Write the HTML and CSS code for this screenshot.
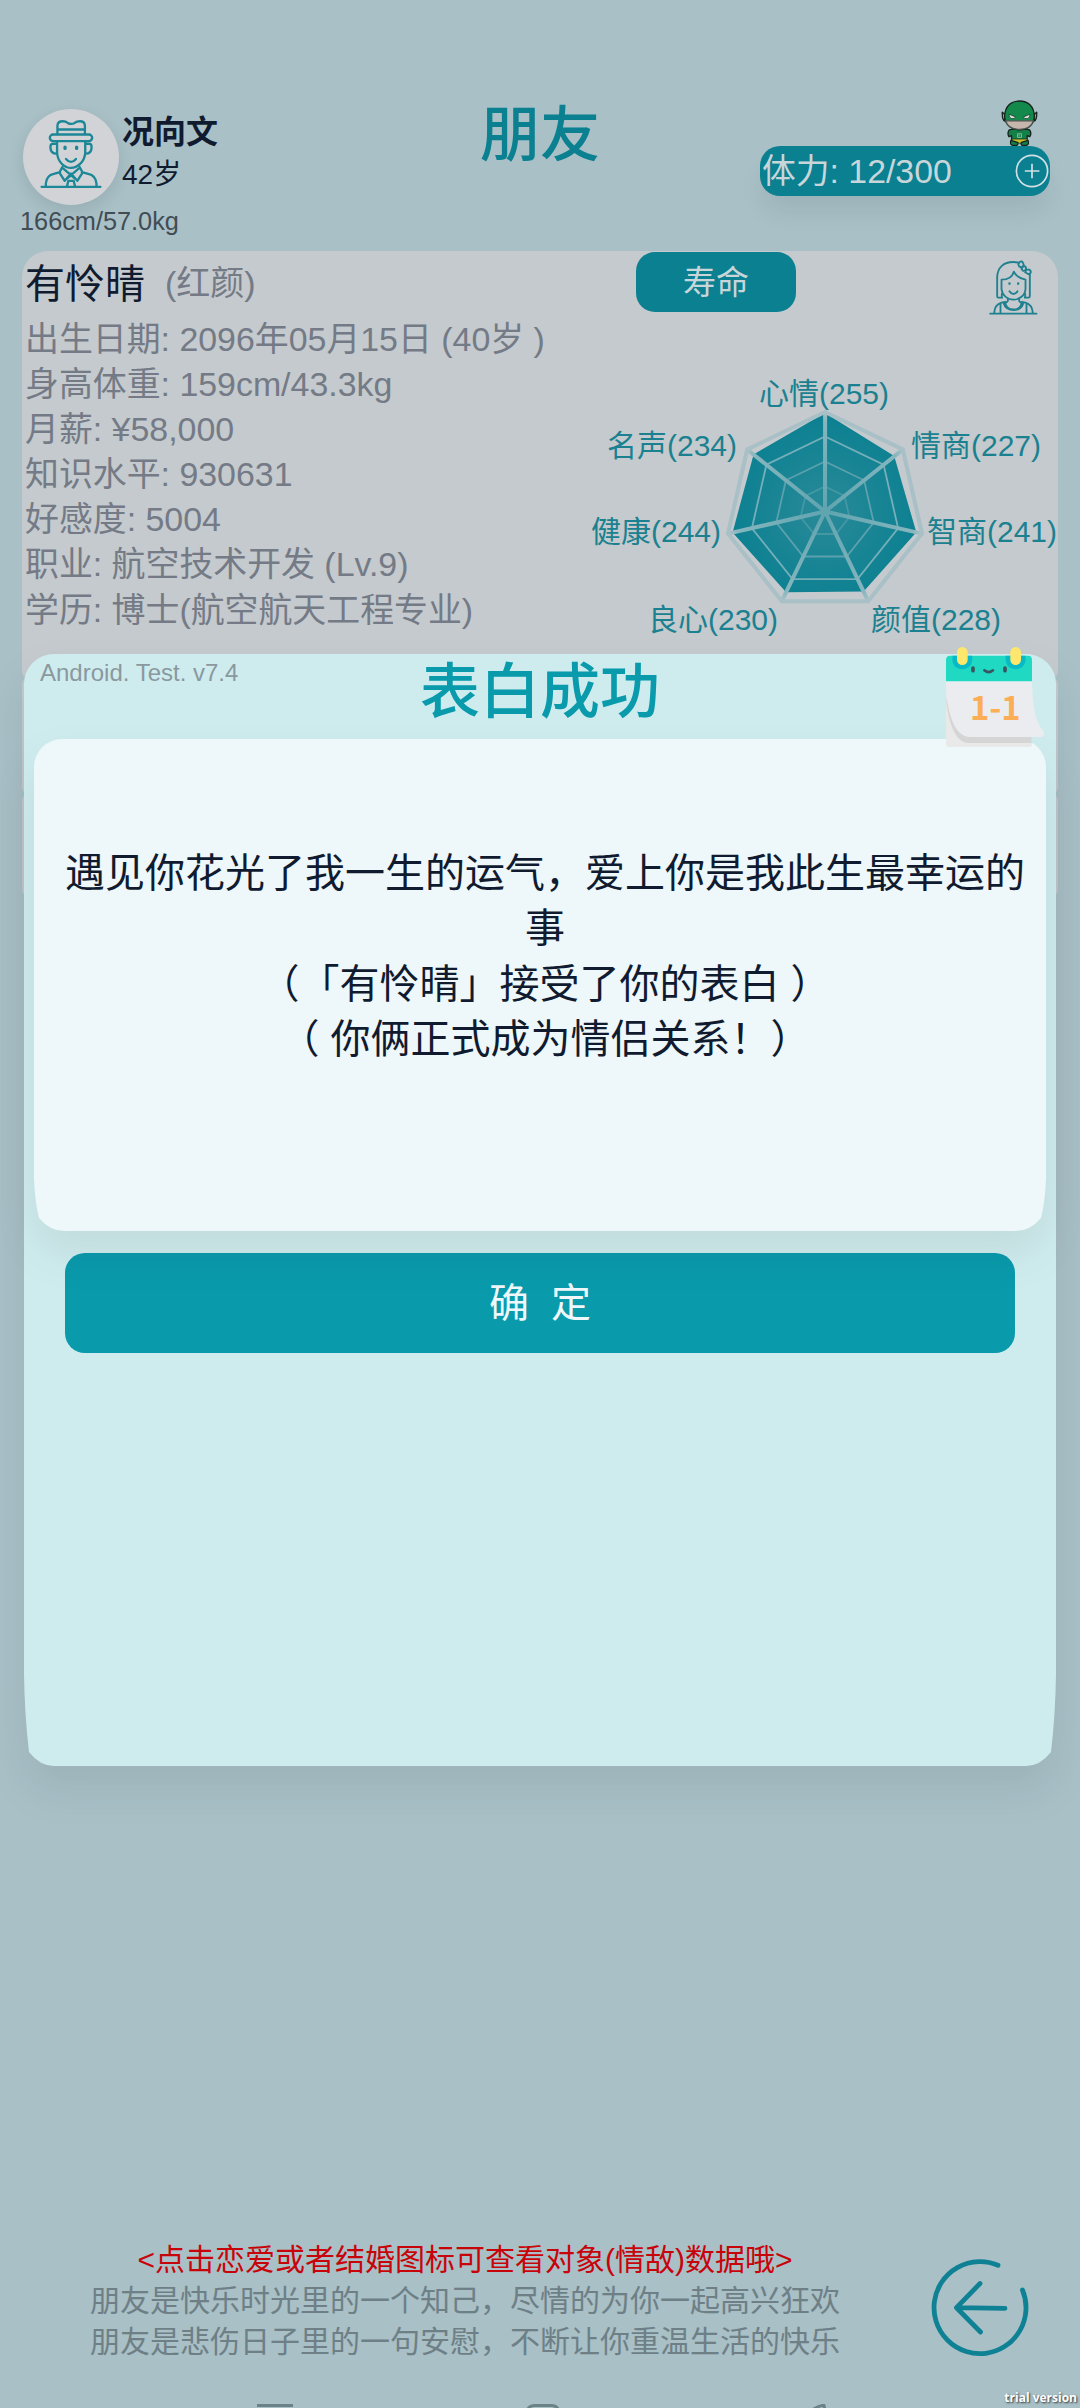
FILE: index.html
```html
<!DOCTYPE html>
<html lang="zh-CN">
<head>
<meta charset="utf-8">
<title>朋友</title>
<link rel="stylesheet" href="styles.css">
</head>
<body>
<div class="screen">
  <header class="header">
    <div class="player">
      <div class="player-top">
        <div class="avatar">
          <svg viewBox="68 85 290 290" fill="none" stroke="#1c8797" stroke-width="7" stroke-linecap="round" stroke-linejoin="round">
            <path d="M172 161V135Q173 122 188 122Q197 122 203 127Q213 133 224 127Q230 122 240 122Q254 122 255 135V161M172 147H255"/>
            <rect x="149" y="162" width="128" height="20" rx="10"/>
            <path d="M171 183V218C173 246 194 263 213 263S253 246 256 218V183M170 190H160Q151 190 151 198V203Q152 219 169 220M257 190H267Q275 190 275 198V203Q274 219 258 220"/>
            <path d="M195 200V204M230 200V204" stroke-width="10"/>
            <path d="M198 236Q213 254 228 236"/>
            <path d="M124 320H302M137 318V310Q139 286 161 281L180 276M290 318V310Q288 286 265 281L246 276M187 260L178 277L194 302L213 280L232 302L248 277L239 260M190 265L225 295M236 265L201 295M205 302L201 318M221 302L225 318M205 302H221"/>
          </svg>
        </div>
        <div class="player-id">
          <div class="player-name">况向文</div>
          <div class="player-age">42岁</div>
        </div>
      </div>
      <div class="player-body">166cm/57.0kg</div>
    </div>
    <h1 class="title">朋友</h1>
    <div class="energy-wrap">
      <svg class="hero" viewBox="845 60 110 139" stroke="#17231f" stroke-width="4" stroke-linejoin="round">
        <path d="M869 150Q862 160 868 171L876 168V180H923V168L931 171Q938 160 930 150L915 147H884Z" fill="#128048"/>
        <path d="M876 178H924L920 186L902 191L880 186Z" fill="#c9bd29" stroke-width="2"/>
        <path d="M874 182Q870 198 882 197H892Q898 193 894 188ZM926 182Q930 198 918 197H908Q902 193 906 188Z" fill="#128048"/>
        <path d="M848 97L856 104V124Q847 121 848 97ZM952 97L944 104V124Q953 121 952 97Z" fill="#b6a847"/>
        <path d="M855 110C856 78 875 63 900 63S944 78 945 110C943 138 921 150 900 150S857 138 855 110Z" fill="#138a4c"/>
        <path d="M858 123H942Q934 148 900 149Q866 148 858 123Z" fill="#c7b6ae" stroke="#4c5550"/>
        <path d="M868 103L888 111Q886 118 876 116Q868 113 868 103ZM932 103L912 111Q914 118 924 116Q932 113 932 103Z" fill="#d9e4dd" stroke-width="2"/>
        <path d="M894 162H906V173H894ZM899 165V170" fill="none" stroke="#94c9a2" stroke-width="2.5"/>
      </svg>
      <div class="energy">
        <span>体力: 12/300</span>
        <svg class="plus" viewBox="0 0 34 34" fill="none" stroke="#d1e0e4" stroke-width="1.7"><circle cx="17" cy="17" r="15.6"/><path d="M9.8 17H24.4M17 9.7V24.3"/></svg>
      </div>
    </div>
  </header>

  <main class="cards">
    <section class="card profile">
      <div class="profile-head">
        <span class="friend-name">有怜晴</span>
        <span class="friend-tag">(红颜)</span>
        <button class="life-btn">寿命</button>
        <svg class="girl" viewBox="806 541 146 165" fill="none" stroke="#1f8090" stroke-width="5.5" stroke-linejoin="round" stroke-linecap="round">
          <path d="M845 654H833Q830 654 830 649V593C831 563 850 547 878 547Q888 547 895 549M928 583V649Q928 654 924 654H913"/>
          <path d="M843 600C863 600 876 590 880 576C885 588 898 596 915 600M843 600V628C845 648 862 660 879 660S914 648 915 628V600"/>
          <path d="M893 553L899 546Q904 543 907 549L910 556L903 564L896 560ZM908 560L914 560Q919 565 915 571L908 574L903 568ZM918 570L926 570Q933 574 930 580L924 584L914 578ZM844 642V652M914 642V652"/>
          <path d="M867 611V612M893 611V612" stroke-width="7"/><path d="M867 635Q879 651 891 635M862 657V664L858 668M896 657V664L900 668"/>
          <path d="M809 702H948M821 701Q823 674 843 669L854 667C858 697 900 697 904 667L915 669Q935 674 937 701M840 671V700M918 671V700M850 669C852 699 906 699 908 669"/>
        </svg>
      </div>
      <div class="profile-body">
        <ul class="facts">
          <li>出生日期: 2096年05月15日 (40岁 )</li>
          <li>身高体重: 159cm/43.3kg</li>
          <li>月薪: ¥58,000</li>
          <li>知识水平: 930631</li>
          <li>好感度: 5004</li>
          <li>职业: 航空技术开发 (Lv.9)</li>
          <li>学历: 博士(航空航天工程专业)</li>
        </ul>
        <svg class="radar" viewBox="578 316 480 330">
          <defs>
            <radialGradient id="fill" gradientUnits="userSpaceOnUse" cx="825" cy="511" r="99"><stop offset="0" stop-color="#2a8a98"/><stop offset="1" stop-color="#0a8091"/></radialGradient>
            <radialGradient id="line" gradientUnits="userSpaceOnUse" cx="825" cy="511" r="99"><stop offset="0" stop-color="#5fa4af"/><stop offset=".9" stop-color="#86b6bf"/><stop offset="1" stop-color="#a8c0c6"/></radialGradient>
          </defs>
          <polygon points="825,413 894.2,455.9 916.3,532.2 863.6,591.6 786.1,592.3 732.6,532.4 753.6,454.4" fill="url(#fill)"/>
          <g transform="translate(825 511.5)" fill="none" stroke-width="1.8">
            <polygon points="0,-75 58.6,-46.8 73.1,16.7 32.5,67.6 -32.5,67.6 -73.1,16.7 -58.6,-46.8" stroke="#76afb9"/>
            <polygon points="0,-50 39.1,-31.2 48.7,11.1 21.7,45 -21.7,45 -48.7,11.1 -39.1,-31.2" stroke="#5ca1ad"/>
            <polygon points="0,-25 19.5,-15.6 24.4,5.6 10.8,22.5 -10.8,22.5 -24.4,5.6 -19.5,-15.6" stroke="#4597a4"/>
          </g>
          <path d="M825 511.5L825.1 412M825 511.5L902.8 449.5M825 511.5L922 533.6M825 511.5L868.2 601.2M825 511.5L781.8 601.2M825 511.5L728 533.6M825 511.5L747.2 449.5" fill="none" stroke="url(#line)" stroke-width="4"/>
          <polygon points="825,412 902.8,449.5 922,533.6 868.2,601.2 781.8,601.2 728,533.6 747.2,449.5" fill="none" stroke="#a8c0c6" stroke-width="4"/>
          <g class="radar-label">
            <text x="759" y="403.500">心情(255)</text>
            <text x="911" y="456">情商(227)</text>
            <text x="927" y="542">智商(241)</text>
            <text x="871" y="630">颜值(228)</text>
            <text x="648" y="630">良心(230)</text>
            <text x="591" y="542">健康(244)</text>
            <text x="607" y="456">名声(234)</text>
          </g>
        </svg>
      </div>
    </section>
    <section class="card strip"></section>
    <section class="card strip last"></section>
  </main>

  <footer class="footer">
    <div class="notes">
      <p class="hint">&lt;点击恋爱或者结婚图标可查看对象(情敌)数据哦&gt;</p>
      <p>朋友是快乐时光里的一个知己，尽情的为你一起高兴狂欢</p>
      <p>朋友是悲伤日子里的一句安慰，不断让你重温生活的快乐</p>
    </div>
    <svg class="back" viewBox="930 2258 100 100" fill="none" stroke="#0e8294" stroke-width="4.8" stroke-linecap="round" stroke-linejoin="round"><path d="M998 2265.300A46 46 0 1 0 1022.500 2290M1005 2308.300L956.500 2307.700L980 2283.500M956.500 2307.700L980.500 2332"/></svg>
  </footer>
  <svg class="nav-icons" viewBox="0 0 1080 4" fill="none" stroke="#6c8286" stroke-width="3"><path d="M257 1.500H293M527.500 6Q529 1.500 535 1.500H551Q557 1.500 558.500 6M812 6Q820 1 824 1.500L825 6"/></svg>

  <div class="dialog" role="dialog">
    <svg class="shape dialog-shape" viewBox="0 0 1032 1112"><path d="M30 0H1002A30 30 0 0 1 1032 30V1019Q1031.500 1060 1027 1098Q1016 1112 1002 1112H30Q16 1112 5 1098Q.5 1060 0 1019V30A30 30 0 0 1 30 0Z" fill="#ceecee"/></svg>
    <div class="dialog-head">
      <span class="version">Android. Test. v7.4</span>
      <h2 class="dialog-title">表白成功</h2>
    </div>
    <div class="message">
      <svg class="shape message-shape" viewBox="0 0 1012 492"><path d="M28 0H984A28 28 0 0 1 1012 28V440Q1011 464 1007 479Q996 492 982 492H30Q16 492 5 479Q1 464 0 440V28A28 28 0 0 1 28 0Z" fill="#eef7f9"/></svg>
      <p class="message-text">遇见你花光了我一生的运气，爱上你是我此生最幸运的事<br>（「有怜晴」接受了你的表白 ）<br>（ 你俩正式成为情侣关系！）</p>
    </div>
    <button class="ok">确&nbsp; 定</button>
    <svg class="calendar" viewBox="135 78 300 306">
      <path d="M138 180H396V372Q396 381 387 381H146Q138 381 138 372Z" fill="#e9e9e9"/>
      <path d="M138 235C143 290 160 369 205 369H395V345H200Z" fill="#d5d5d5"/>
      <path d="M138 180H396C397 260 406 305 430 332Q436 350 424 351H210C165 351 143 285 138 205Z" fill="#ebecef"/>
      <path d="M138 184V120Q138 107 151 107H384Q396 107 396 120V184Z" fill="#20d9c3"/>
      <path d="M158 107H216Q220 130 205 142Q187 154 168 142Q154 130 158 107ZM317 107H376Q380 130 365 142Q347 154 328 142Q314 130 317 107Z" fill="#08b9c6"/>
      <rect x="171" y="81" width="32" height="54" rx="16" fill="#fee76c"/><rect x="331" y="81" width="32" height="54" rx="16" fill="#fee76c"/>
      <path d="M219 144V152M315 144V152" stroke="#3b5560" stroke-width="11" stroke-linecap="round"/><path d="M253 151Q266 162 279 151" fill="none" stroke="#3b5560" stroke-width="8" stroke-linecap="round"/>
      <text class="cal-date" x="286" y="299" text-anchor="middle">1-1</text>
    </svg>
  </div>
  <div class="watermark">trial version</div>
</div>
</body>
</html>
```
FILE: styles.css
```css
* { box-sizing: border-box; margin: 0; padding: 0; }

body {
  font-family: "Liberation Sans", "Noto Sans CJK SC", sans-serif;
  color: #101b30;
  background: #a8c0c6;
}

button { border: 0; font: inherit; }

.screen {
  position: relative;
  display: flex;
  flex-direction: column;
  width: 1080px;
  height: 2408px;
  overflow: hidden;
  background: #a8c0c6;
}

/* header */
.header {
  display: grid;
  grid-template-columns: 1fr auto 1fr;
  height: 251px;
}
.player { padding: 109px 0 0 20px; }
.player-top { display: flex; gap: 3px; padding-left: 3px; }
.avatar {
  width: 96px;
  height: 96px;
  border-radius: 50%;
  background: #d1d3d7;
  box-shadow: 0 6px 16px rgba(0, 20, 30, .1);
}
.avatar svg { display: block; width: 96px; height: 96px; }
.player-name { margin-top: 2px; font-size: 32px; font-weight: 700; line-height: 43px; }
.player-age { font-size: 28px; line-height: 42px; }
.player-body { font-size: 25.3px; line-height: 32px; color: #414c55; }
.title {
  padding-top: 100px;
  font-size: 60px;
  font-weight: 500;
  line-height: 72px;
  color: #0a8091;
}
.energy-wrap {
  display: flex;
  flex-direction: column;
  align-items: flex-end;
  padding: 100px 30px 0 0;
}
.hero { width: 37px; height: 46px; margin-right: 12px; }
.energy {
  display: flex;
  align-items: center;
  justify-content: space-between;
  width: 290px;
  height: 50px;
  padding: 0 1px 0 2px;
  border-radius: 20px;
  background: #0a8091;
  box-shadow: 0 18px 26px -4px rgba(0, 20, 30, .08);
  font-size: 33.8px;
  line-height: 50px;
  color: #c8d6da;
}
.plus { width: 34px; height: 34px; }

/* cards */
.cards { display: flex; flex-direction: column; padding: 0 22px; }
.card { background: #c4cacd; }
.profile { height: 427px; border-radius: 26px 26px 6px 6px; }
.strip { height: 116px; border-radius: 6px; }
.last { height: 102px; }
.profile-head { display: flex; align-items: center; height: 65px; padding-left: 3px; }
.friend-name { width: 140px; font-size: 40px; line-height: 62px; }
.friend-tag { width: 471px; margin-top: -2px; font-size: 34px; line-height: 62px; color: #747a86; }
.life-btn {
  align-self: flex-start;
  width: 160px;
  height: 60px;
  margin-top: 1px;
  padding-top: 1px;
  border-radius: 19px;
  background: #0a8091;
  color: #c8d6da;
  font-size: 33px;
  line-height: 59px;
}
.girl { width: 49px; height: 55px; margin: 8px 20px 0 auto; }
.profile-body { display: flex; }
.facts {
  width: 556px;
  padding: 1px 0 0 3px;
  list-style: none;
  font-size: 33.9px;
  line-height: 45.1px;
  color: #747a86;
  white-space: nowrap;
}
.radar { width: 480px; height: 330px; }
.radar-label { font-size: 30px; fill: #1b8190; }

/* footer */
.footer {
  display: flex;
  justify-content: space-between;
  margin-top: auto;
  padding: 0 50px 42px 90px;
}
.notes {
  width: 750px;
  font-size: 30px;
  line-height: 41px;
  text-align: center;
  white-space: nowrap;
  color: #6e7f86;
}
.notes .hint { color: #c8040b; }
.back { width: 100px; height: 100px; margin-top: 19px; }
.nav-icons { width: 1080px; height: 4px; }

/* dialog */
.dialog {
  position: absolute;
  top: 654px;
  left: 24px;
  display: flex;
  flex-direction: column;
  width: 1032px;
  height: 1112px;
}
.shape { position: absolute; inset: 0; z-index: -1; width: 100%; height: 100%; overflow: visible; }
.dialog, .message { isolation: isolate; }
.dialog-shape { filter: drop-shadow(0 22px 20px rgba(0, 20, 30, .075)); }
.message-shape { filter: drop-shadow(0 22px 20px rgba(60, 20, 0, .075)); }
.dialog-head {
  display: grid;
  grid-template-columns: 1fr auto 1fr;
  height: 85px;
}
.version { padding-left: 16px; font-size: 24px; line-height: 38px; color: #8a989f; }
.dialog-title { padding-top: 3px; font-size: 60px; font-weight: 500; line-height: 72px; color: #099aac; }
.message {
  position: relative;
  width: 1012px;
  height: 492px;
  margin-left: 10px;
  padding: 107px 16px 0 26px;
}
.message-text {
  font-size: 40px;
  line-height: 55.3px;
  text-align: center;
  text-spacing-trim: space-all;
}
.ok {
  width: 950px;
  height: 100px;
  margin: 22px 0 0 41px;
  padding-bottom: 6px;
  border-radius: 20px;
  background: #099aac;
  color: #eef7f9;
  font-size: 40px;
}
.calendar { position: absolute; top: -8px; left: 921px; width: 100px; height: 102px; }
.cal-date { font: 700 98px "Noto Sans CJK SC", sans-serif; fill: #fbae55; }

.watermark {
  position: absolute;
  right: 3px;
  bottom: 1px;
  font: 700 12px/18px "Open Sans", sans-serif;
  color: #fff;
  text-shadow: 1px 1px 2px #333;
}
```
